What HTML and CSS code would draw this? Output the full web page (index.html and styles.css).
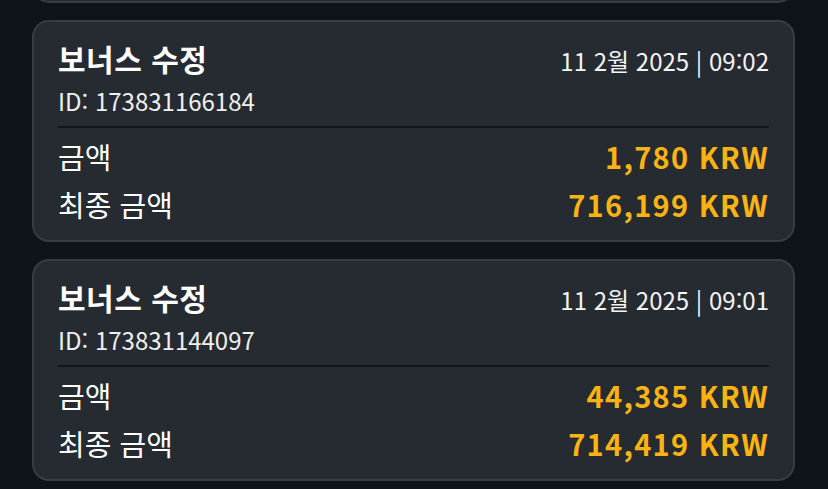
FILE: index.html
```html
<!DOCTYPE html>
<html lang="ko">
<head>
  <meta charset="UTF-8">
  <meta name="viewport" content="width=device-width, initial-scale=1.0">
  <title>보너스 내역</title>
  <link rel="stylesheet" href="styles.css">
</head>
<body>

  <div class="history">

    <div class="card">
      <div class="card-head">
        <div class="card-title">보너스 수정</div>
        <div class="card-date">11 2월 2025 | 09:03</div>
      </div>
      <div class="card-id">ID: 173831190512</div>
      <div class="row">
        <span class="label">금액</span>
        <span class="amount">2,500 KRW</span>
      </div>
      <div class="row">
        <span class="label">최종 금액</span>
        <span class="amount">718,699 KRW</span>
      </div>
    </div>

    <div class="card">
      <div class="card-head">
        <div class="card-title">보너스 수정</div>
        <div class="card-date">11 2월 2025 | 09:02</div>
      </div>
      <div class="card-id">ID: 173831166184</div>
      <div class="row">
        <span class="label">금액</span>
        <span class="amount">1,780 KRW</span>
      </div>
      <div class="row">
        <span class="label">최종 금액</span>
        <span class="amount">716,199 KRW</span>
      </div>
    </div>

    <div class="card">
      <div class="card-head">
        <div class="card-title">보너스 수정</div>
        <div class="card-date">11 2월 2025 | 09:01</div>
      </div>
      <div class="card-id">ID: 173831144097</div>
      <div class="row">
        <span class="label">금액</span>
        <span class="amount">44,385 KRW</span>
      </div>
      <div class="row">
        <span class="label">최종 금액</span>
        <span class="amount">714,419 KRW</span>
      </div>
    </div>

  </div>

</body>
</html>
```

FILE: styles.css
```css
/* Bonus history list */
body {
  margin: 0;
  background-color: #0f141a;
  font-family: "Noto Sans CJK KR", "Noto Sans", sans-serif;
  color: #fff;
  overflow: hidden;
}
.history {
  display: flex;
  flex-direction: column;
  gap: 17px;
  padding: 0 33px 0 32px;
  margin-top: -219px; /* list is scrolled a bit */
}
.card {
  background-color: #262a31;
  border: 2px solid #393c41;
  border-radius: 17px;
  padding: 16px 24px 12px 24px;
}
.card-head {
  display: flex;
  justify-content: space-between;
  align-items: baseline;
}
.card-title {
  font-size: 30px;
  font-weight: bold;
  line-height: 40px;
  letter-spacing: 0.5px;
}
.card-date {
  font-size: 24px;
  color: #f4f4f4;
}
.card-id {
  font-size: 24px;
  line-height: 30px;
  color: #f0f0f0;
  margin-top: 8px;
  padding-bottom: 10px;
  border-bottom: 2px solid #12151b;
  margin-bottom: 4px;
}
.row {
  display: flex;
  justify-content: space-between;
  align-items: center;
  height: 48px;
}
.label {
  font-size: 29px;
}
.amount {
  font-size: 29px;
  font-weight: bold;
  color: #f9b414;
  letter-spacing: 1.3px;
}
```
